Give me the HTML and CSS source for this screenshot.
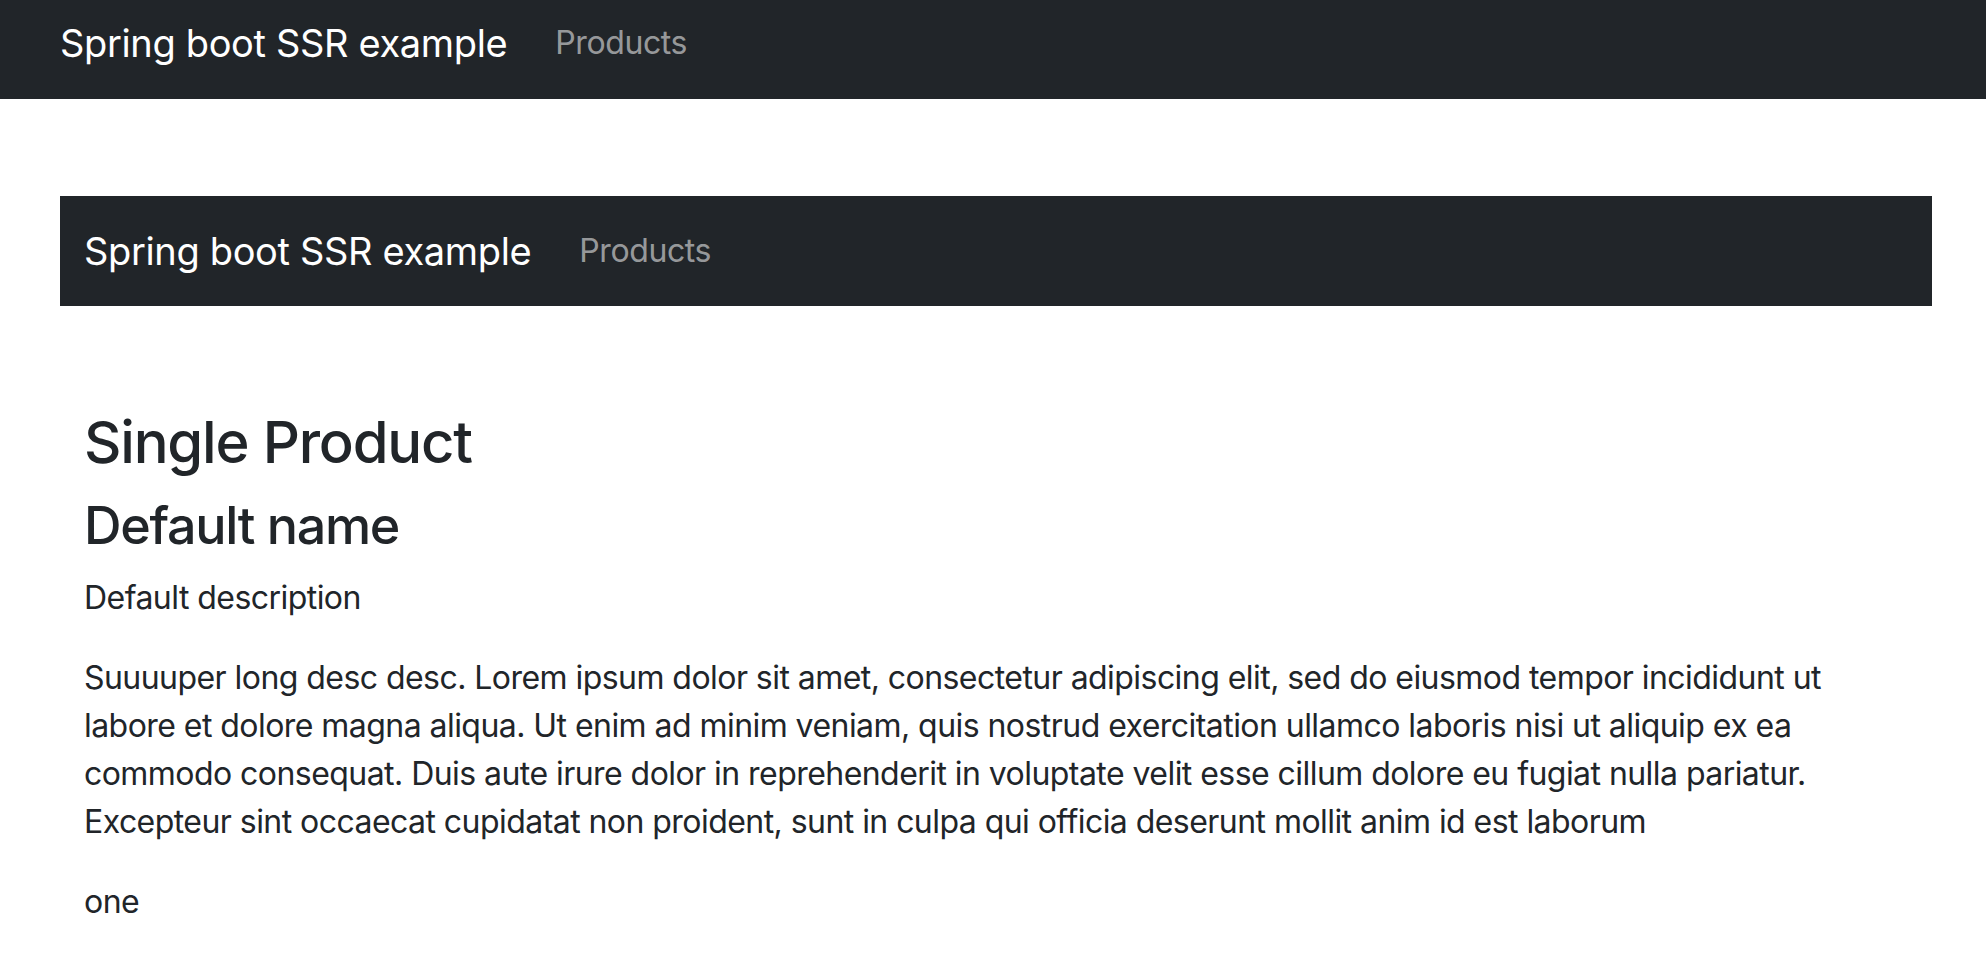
FILE: index.html
```html
<!DOCTYPE html>
<html lang="en">
<head>
<meta charset="utf-8">
<title>Spring boot SSR example</title>
<link rel="stylesheet" href="styles.css">
</head>
<body>
<nav class="topbar">
  <a class="brand" href="#">Spring boot SSR example</a>
  <a class="nav-link" href="#">Products</a>
</nav>
<main class="page">
  <nav class="navbar">
    <a class="brand" href="#">Spring boot SSR example</a>
    <a class="nav-link" href="#">Products</a>
  </nav>
  <section class="content">
    <h2 class="title">Single Product</h2>
    <h3 class="name">Default name</h3>
    <p class="text">Default description</p>
    <p class="text">Suuuuper long desc desc. Lorem ipsum dolor sit amet, consectetur adipiscing elit, sed do eiusmod tempor incididunt ut labore et dolore magna aliqua. Ut enim ad minim veniam, quis nostrud exercitation ullamco laboris nisi ut aliquip ex ea commodo consequat. Duis aute irure dolor in reprehenderit in voluptate velit esse cillum dolore eu fugiat nulla pariatur. Excepteur sint occaecat cupidatat non proident, sunt in culpa qui officia deserunt mollit anim id est laborum</p>
    <p class="text">one</p>
  </section>
</main>
</body>
</html>
```

FILE: styles.css
```css
* { box-sizing: border-box; }

html, body {
  margin: 0;
  padding: 0;
  background: #ffffff;
}

body {
  font-family: Inter, "Noto Sans", "Liberation Sans", sans-serif;
  font-size: 32px;
  line-height: 1.5;
  color: #212529;
}

a { text-decoration: none; }

.topbar {
  display: flex;
  align-items: center;
  height: 99px;
  padding: 0 60px 14px 60px;
  background: #212529;
}

.navbar {
  display: flex;
  align-items: center;
  height: 110px;
  margin: 97px 54px 0 60px;
  padding: 0 24px;
  background: #212529;
}

.brand {
  font-size: 38px;
  line-height: 60px;
  color: #ffffff;
  margin-right: 32px;
  letter-spacing: -0.35px;
}

.nav-link {
  font-size: 32px;
  line-height: 48px;
  padding: 0 16px;
  color: rgba(255, 255, 255, 0.55);
  letter-spacing: -0.4px;
}

.content {
  margin: 0 54px 0 60px;
  padding: 100px 24px 0 24px;
}

.title {
  margin: 0 0 16px 0;
  font-size: 58px;
  line-height: 72px;
  font-weight: 500;
  letter-spacing: -1.2px;
}

.name {
  margin: 0 0 16px 0;
  font-size: 52px;
  line-height: 64px;
  font-weight: 500;
  letter-spacing: -1.3px;
}

.text {
  margin: 0 0 32px 0;
  letter-spacing: -0.55px;
}
```
